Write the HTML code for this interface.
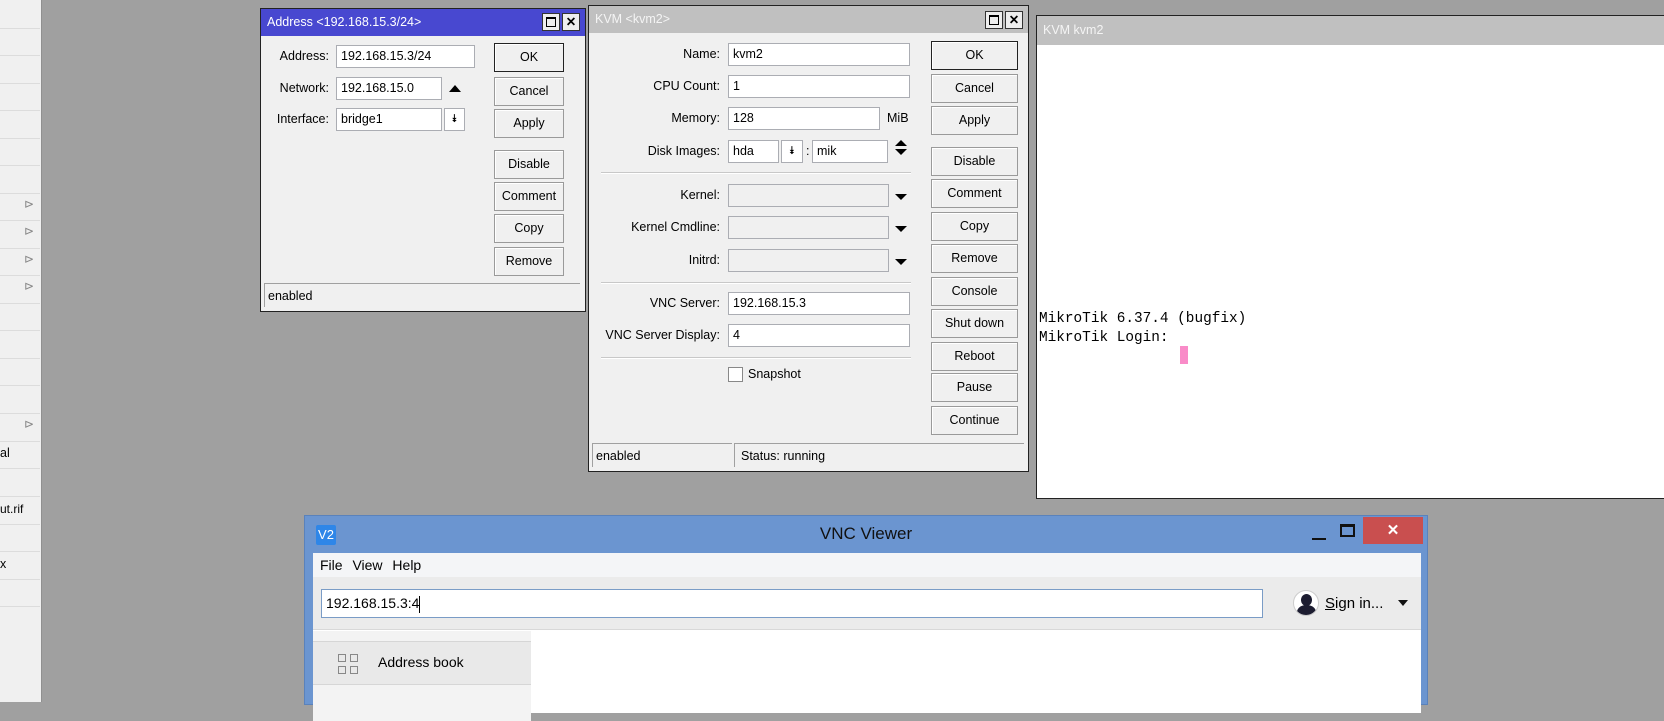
<!DOCTYPE html>
<html><head><meta charset="utf-8"><style>
*{box-sizing:border-box;margin:0;padding:0}
body{width:1664px;height:702px;overflow:hidden;background:#a0a0a0;position:relative;font-family:"Liberation Sans",Arial,sans-serif;font-size:12.5px;color:#000}
.a{position:absolute}
.side{left:0;top:0;width:42px;height:702px;background:#f0f0f0;border-right:1px solid #909090}
.hl{position:absolute;left:0;width:40px;height:1px;background:#dcdcdc}
.win{position:absolute;background:#f0f0f0;border:1px solid #222}
.inp{position:absolute;background:#fff;border:1px solid #abadb3;height:23px;line-height:21px;padding-left:4px;font-size:12.5px}
.dis{background:#f0f0f0}
.lbl{position:absolute;text-align:right;font-size:12.5px;line-height:23px}
.btn{position:absolute;background:#f0f0f0;border:1px solid #9a9a9a;box-shadow:inset 1px 1px 0 #fff;text-align:center;font-size:12.5px;height:29px;line-height:27px}
.sep{position:absolute;height:2px;border-top:1px solid #c8c8c8;border-bottom:1px solid #fff}
.tri{position:absolute;width:0;height:0;border-left:6px solid transparent;border-right:6px solid transparent}
.tb{position:absolute;width:18px;height:18px;border:1px solid #333;background:#eee}
</style></head><body>
<div class="a side">
<div class="hl" style="top:28px"></div><div class="hl" style="top:55px"></div><div class="hl" style="top:83px"></div><div class="hl" style="top:110px"></div><div class="hl" style="top:138px"></div><div class="hl" style="top:165px"></div><div class="hl" style="top:193px"></div><div class="hl" style="top:220px"></div><div class="hl" style="top:248px"></div><div class="hl" style="top:275px"></div><div class="hl" style="top:303px"></div><div class="hl" style="top:330px"></div><div class="hl" style="top:358px"></div><div class="hl" style="top:385px"></div><div class="hl" style="top:413px"></div><div class="hl" style="top:441px"></div><div class="hl" style="top:468px"></div><div class="hl" style="top:496px"></div><div class="hl" style="top:524px"></div><div class="hl" style="top:551px"></div><div class="hl" style="top:579px"></div><div class="hl" style="top:606px"></div>
<div class="a" style="left:24px;top:197px;color:#888;font-size:12px">⊳</div>
<div class="a" style="left:24px;top:224px;color:#888;font-size:12px">⊳</div>
<div class="a" style="left:24px;top:252px;color:#888;font-size:12px">⊳</div>
<div class="a" style="left:24px;top:279px;color:#888;font-size:12px">⊳</div>
<div class="a" style="left:24px;top:417px;color:#888;font-size:12px">⊳</div>
<div class="a" style="left:0;top:446px">al</div>
<div class="a" style="left:0;top:502px;font-size:12px">ut.rif</div>
<div class="a" style="left:0;top:557px">x</div>
</div>

<!-- Address window -->
<div class="win" style="left:260px;top:8px;width:326px;height:304px">
<div class="a" style="left:0;top:0;width:324px;height:27px;background:#4848d0;color:#fff;font-size:12.5px;line-height:27px;padding-left:6px">Address &lt;192.168.15.3/24&gt;</div>
<div class="tb" style="left:281px;top:4px"></div><div class="a" style="left:285px;top:8px;width:10px;height:10px;border:1px solid #000;border-top-width:2px"></div>
<div class="tb" style="left:301px;top:4px;font-weight:bold;text-align:center;line-height:16px">✕</div>
<div class="lbl" style="left:0;width:68px;top:36px">Address:</div>
<div class="inp" style="left:75px;top:36px;width:139px">192.168.15.3/24</div>
<div class="lbl" style="left:0;width:68px;top:68px">Network:</div>
<div class="inp" style="left:75px;top:68px;width:106px">192.168.15.0</div>
<div class="tri" style="left:188px;top:76px;border-bottom:7px solid #000"></div>
<div class="lbl" style="left:0;width:68px;top:99px">Interface:</div>
<div class="inp" style="left:75px;top:99px;width:106px">bridge1</div>
<div class="inp" style="left:183px;top:99px;width:21px;padding:0;text-align:center;font-size:11px">⯯</div>
<div class="btn" style="left:233px;top:34px;width:70px;border-color:#222">OK</div>
<div class="btn" style="left:233px;top:68px;width:70px">Cancel</div>
<div class="btn" style="left:233px;top:100px;width:70px">Apply</div>
<div class="btn" style="left:233px;top:141px;width:70px">Disable</div>
<div class="btn" style="left:233px;top:173px;width:70px">Comment</div>
<div class="btn" style="left:233px;top:205px;width:70px">Copy</div>
<div class="btn" style="left:233px;top:238px;width:70px">Remove</div>
<div class="a" style="left:3px;top:274px;width:316px;height:24px;border-top:1px solid #a0a0a0;border-left:1px solid #a0a0a0;line-height:24px;padding-left:3px">enabled</div>
</div>

<!-- KVM window -->
<div class="win" style="left:588px;top:5px;width:441px;height:467px">
<div class="a" style="left:0;top:0;width:439px;height:27px;background:#c0c0c0;color:#f4f4f4;line-height:27px;padding-left:6px">KVM &lt;kvm2&gt;</div>
<div class="tb" style="left:396px;top:5px"></div><div class="a" style="left:400px;top:9px;width:10px;height:10px;border:1px solid #000;border-top-width:2px"></div>
<div class="tb" style="left:416px;top:5px;font-weight:bold;text-align:center;line-height:16px">✕</div>
<div class="lbl" style="left:0;width:131px;top:37px">Name:</div><div class="inp" style="left:139px;top:37px;width:182px">kvm2</div>
<div class="lbl" style="left:0;width:131px;top:69px">CPU Count:</div><div class="inp" style="left:139px;top:69px;width:182px">1</div>
<div class="lbl" style="left:0;width:131px;top:101px">Memory:</div><div class="inp" style="left:139px;top:101px;width:152px">128</div><div class="a" style="left:298px;top:101px;line-height:23px">MiB</div>
<div class="lbl" style="left:0;width:131px;top:134px">Disk Images:</div><div class="inp" style="left:139px;top:134px;width:51px">hda</div>
<div class="inp" style="left:192px;top:134px;width:22px;padding:0;text-align:center;font-size:11px">⯯</div>
<div class="a" style="left:217px;top:134px;line-height:23px">:</div>
<div class="inp" style="left:223px;top:134px;width:76px">mik</div>
<div class="tri" style="left:306px;top:134px;border-bottom:6px solid #000"></div><div class="tri" style="left:306px;top:143px;border-top:6px solid #000"></div>
<div class="sep" style="left:12px;top:166px;width:310px"></div>
<div class="lbl" style="left:0;width:131px;top:178px">Kernel:</div><div class="inp dis" style="left:139px;top:178px;width:161px"></div><div class="tri" style="left:306px;top:188px;border-top:6px solid #000"></div>
<div class="lbl" style="left:0;width:131px;top:210px">Kernel Cmdline:</div><div class="inp dis" style="left:139px;top:210px;width:161px"></div><div class="tri" style="left:306px;top:220px;border-top:6px solid #000"></div>
<div class="lbl" style="left:0;width:131px;top:243px">Initrd:</div><div class="inp dis" style="left:139px;top:243px;width:161px"></div><div class="tri" style="left:306px;top:253px;border-top:6px solid #000"></div>
<div class="sep" style="left:12px;top:276px;width:310px"></div>
<div class="lbl" style="left:0;width:131px;top:286px">VNC Server:</div><div class="inp" style="left:139px;top:286px;width:182px">192.168.15.3</div>
<div class="lbl" style="left:0;width:131px;top:318px">VNC Server Display:</div><div class="inp" style="left:139px;top:318px;width:182px">4</div>
<div class="sep" style="left:12px;top:351px;width:310px"></div>
<div class="a" style="left:139px;top:361px;width:15px;height:15px;background:#fff;border:1px solid #888"></div>
<div class="a" style="left:159px;top:360px;line-height:17px">Snapshot</div>
<div class="btn" style="left:342px;top:35px;width:87px;border-color:#222">OK</div>
<div class="btn" style="left:342px;top:68px;width:87px">Cancel</div>
<div class="btn" style="left:342px;top:100px;width:87px">Apply</div>
<div class="btn" style="left:342px;top:141px;width:87px">Disable</div>
<div class="btn" style="left:342px;top:173px;width:87px">Comment</div>
<div class="btn" style="left:342px;top:206px;width:87px">Copy</div>
<div class="btn" style="left:342px;top:238px;width:87px">Remove</div>
<div class="btn" style="left:342px;top:271px;width:87px">Console</div>
<div class="btn" style="left:342px;top:303px;width:87px">Shut down</div>
<div class="btn" style="left:342px;top:336px;width:87px">Reboot</div>
<div class="btn" style="left:342px;top:367px;width:87px">Pause</div>
<div class="btn" style="left:342px;top:400px;width:87px">Continue</div>
<div class="a" style="left:3px;top:437px;width:140px;height:24px;border-top:1px solid #a0a0a0;border-left:1px solid #a0a0a0;line-height:24px;padding-left:3px">enabled</div>
<div class="a" style="left:145px;top:437px;width:290px;height:24px;border-top:1px solid #a0a0a0;border-left:1px solid #a0a0a0;line-height:24px;padding-left:6px">Status: running</div>
</div>

<!-- Console window -->
<div class="a" style="left:1036px;top:15px;width:640px;height:484px;background:#fff;border:1px solid #222">
<div class="a" style="left:0;top:0;width:640px;height:29px;background:#c0c0c0;color:#f4f4f4;line-height:29px;padding-left:6px;font-size:12.5px">KVM kvm2</div>
<div class="a" style="left:2px;top:294px;font-family:'Liberation Mono',monospace;font-size:14.4px;line-height:19px;white-space:pre">MikroTik 6.37.4 (bugfix)
MikroTik Login:</div>
<div class="a" style="left:143px;top:330px;width:8px;height:18px;background:#f98bc8"></div>
</div>

<!-- VNC Viewer -->
<div class="a" style="left:304px;top:515px;width:1124px;height:190px;background:#6b95d0;border:1px solid #5a82bb">
<div class="a" style="left:11px;top:9px;width:20px;height:20px;background:#2e86e8;border-radius:2px;color:#fff;font-size:13px;line-height:20px;text-align:center">V2</div>
<div class="a" style="left:0;top:8px;width:1122px;text-align:center;font-size:17px;color:#111">VNC Viewer</div>
<div class="a" style="left:1007px;top:22px;width:14px;height:2px;background:#111"></div>
<div class="a" style="left:1035px;top:8px;width:15px;height:13px;border:2px solid #111;border-top-width:3px"></div>
<div class="a" style="left:1058px;top:1px;width:60px;height:27px;background:#c94f4f;color:#fff;text-align:center;line-height:27px;font-size:15px;font-weight:bold">✕</div>
<div class="a" style="left:8px;top:37px;width:1108px;height:160px;background:#fff">
<div class="a" style="left:0;top:0;width:1108px;height:24px;background:#f4f5f7;font-size:14px;line-height:24px;padding-left:7px;word-spacing:6px">File View Help</div>
<div class="a" style="left:0;top:24px;width:1108px;height:53px;background:#ebebeb;border-bottom:1px solid #d8d8d8">
<div class="a" style="left:8px;top:12px;width:942px;height:29px;background:#fff;border:1px solid #7a9cc6;font-size:14px;line-height:27px;padding-left:4px">192.168.15.3:4<span style="display:inline-block;width:1px;height:17px;background:#000;vertical-align:middle"></span></div>
<div class="a" style="left:980px;top:13px;width:26px;height:26px;border-radius:50%;background:#fff;border:1px solid #ccc;overflow:hidden"><div class="a" style="left:7px;top:3px;width:11px;height:12px;border-radius:50%;background:#1c1c30"></div><div class="a" style="left:3px;top:14px;width:19px;height:14px;border-radius:50% 50% 0 0;background:#1c1c30"></div></div>
<div class="a" style="left:1012px;top:18px;font-size:15px"><u>S</u>ign in...</div>
<div class="tri" style="left:1085px;top:23px;border-left-width:5px;border-right-width:5px;border-top:6px solid #111"></div>
</div>
<div class="a" style="left:0;top:78px;width:218px;height:90px;background:#f3f3f3">
<div class="a" style="left:0;top:10px;width:218px;height:44px;background:#e9e9e9;border-top:1px solid #d6d6d6;border-bottom:1px solid #d6d6d6">
<div class="a" style="left:25px;top:12px;width:8px;height:8px;border:1.5px solid #888"></div><div class="a" style="left:37px;top:12px;width:8px;height:8px;border:1.5px solid #888"></div>
<div class="a" style="left:25px;top:24px;width:8px;height:8px;border:1.5px solid #888"></div><div class="a" style="left:37px;top:24px;width:8px;height:8px;border:1.5px solid #888"></div>
<div class="a" style="left:65px;top:12px;font-size:14px">Address book</div>
</div></div>
</div>
</div>
</body></html>
